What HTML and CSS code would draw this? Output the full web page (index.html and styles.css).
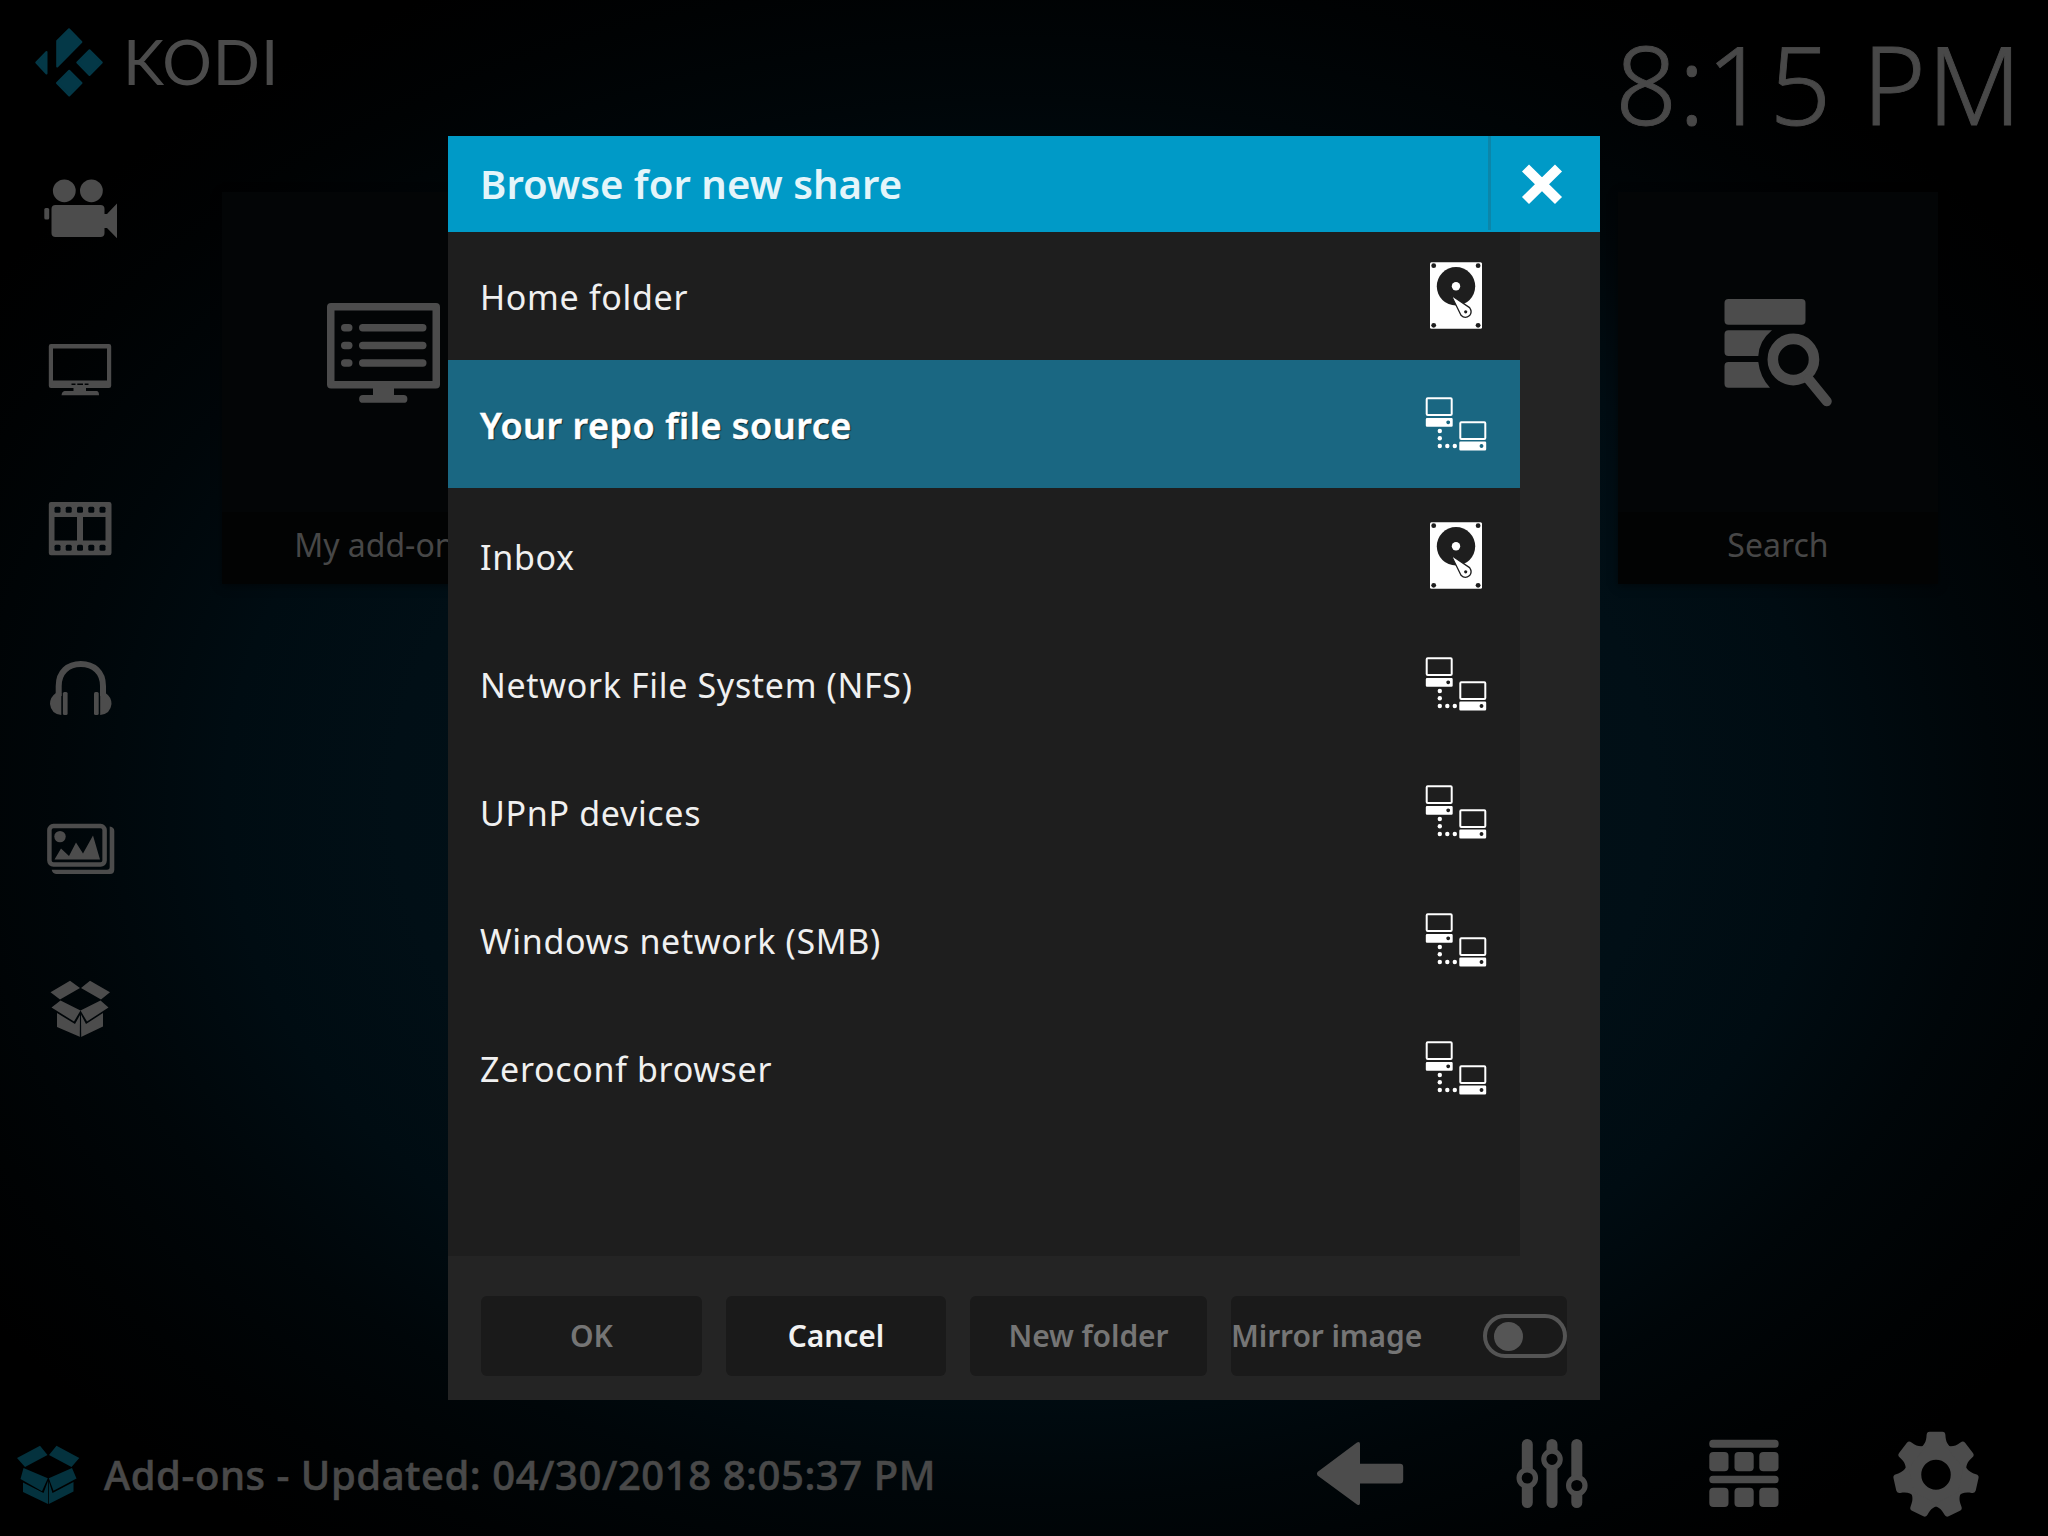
FILE: index.html
```html
<!DOCTYPE html>
<html lang="en">
<head>
<meta charset="utf-8">
<title>Kodi – Browse for new share</title>
<link rel="stylesheet" href="styles.css">
</head>
<body>
<svg class="defs" width="0" height="0" aria-hidden="true">
  <symbol id="hdd" viewBox="0 0 80 128">
    <rect x="14" y="30.3" width="52" height="66.4" rx="1.5" fill="#fff"/>
    <g fill="#1e1e1e">
      <circle cx="17.7" cy="33.7" r="2.4"/><circle cx="62.1" cy="33.7" r="2.4"/>
      <circle cx="17.7" cy="93.3" r="2.4"/><circle cx="62.1" cy="93.3" r="2.4"/>
      <circle cx="40" cy="54.3" r="19.2"/>
    </g>
    <circle cx="40" cy="54.3" r="4.2" fill="#fff"/>
    <path d="M35.2 63.2L53.6 75.6Q56.600 80 53.600 83.600Q49 87.400 45 83.200Z" fill="#fff" stroke="#1e1e1e" stroke-width="1.3" stroke-linejoin="round"/>
    <circle cx="49.7" cy="79.8" r="1.6" fill="#1e1e1e"/>
  </symbol>
  <symbol id="net" viewBox="0 0 80 128">
    <g fill="none" stroke="#fff" stroke-width="2">
      <rect x="10.7" y="38.3" width="25" height="16.6" rx="1"/>
      <rect x="44.3" y="62.3" width="25" height="16.6" rx="1"/>
    </g>
    <path fill="#fff" fill-rule="evenodd" d="M11 58h24.500q1.200 0 1.200 1.200v6.300q0 1.200-1.200 1.200H11q-1.200 0-1.200-1.200v-6.300Q9.800 58 11 58zM32.200 60.400a1.900 1.900 0 1 0 .01 0zM44.500 81.600H69q1.200 0 1.200 1.200v6.400q0 1.200-1.200 1.200H44.500q-1.200 0-1.200-1.200v-6.400q0-1.200 1.200-1.200zM65.500 84.100a1.900 1.900 0 1 0 .01 0z"/>
    <g fill="#fff">
      <circle cx="23.800" cy="71" r="2.200"/><circle cx="23.800" cy="78.300" r="2.200"/><circle cx="23.800" cy="86" r="2.200"/>
      <circle cx="31.300" cy="86" r="2.200"/><circle cx="38.800" cy="86" r="2.200"/>
    </g>
  </symbol>
</svg>

<div class="screen">
  <header class="topbar">
    <div class="brand">
      <svg class="brand-mark" width="123" height="129" viewBox="0 0 123 129">
        <g stroke-width="2" stroke-linejoin="round">
          <path d="M57.200 41L69 29.200L81.400 42L57.200 66.500Z"/>
          <path d="M36.300 62.500L46.500 52V73.500Z"/>
          <path d="M77.300 62.500L89.500 50.200L101.800 62.500L89.500 75Z"/>
          <path d="M57 83L69.200 70.700L81.500 83L69.200 95.500Z"/>
        </g>
      </svg>
      <span class="brand-name">KODI</span>
    </div>
    <div class="clock">8:15 PM</div>
  </header>

  <div class="main">
    <nav class="sidebar">
      <svg viewBox="0 129 160 160">
        <circle cx="64.300" cy="190.800" r="11.400"/><circle cx="91.400" cy="190.800" r="11.400"/>
        <rect x="51.500" y="205" width="53" height="32" rx="4"/>
        <rect x="44.300" y="208" width="4.900" height="11.500" rx="1.500"/>
        <path d="M104 214H107L117 203.500V238.200L107 228H104Z"/>
      </svg>
      <svg viewBox="0 289 160 160">
        <path fill-rule="evenodd" d="M51 344H109Q111.200 344 111.200 346.200V385.800Q111.200 388 109 388H86V391H97Q99 391.500 99 395.200H61.500Q62 391.500 64.500 391H73.500V388H51Q48.800 388 48.800 385.800V346.200Q48.800 344 51 344ZM53 348.500V380.500H107V348.500ZM71.500 383.500V385H75.500V383.500ZM77.300 383.500V385H83V383.500ZM84.700 383.500V385H88.500V383.500Z"/>
      </svg>
      <svg viewBox="0 449 160 160">
        <path fill-rule="evenodd" d="M51 502H109.300Q111.500 502 111.500 504.200V553Q111.500 555.200 109.300 555.200H51Q48.800 555.200 48.800 553V504.200Q48.800 502 51 502ZM54.500 517V540.500H77V517ZM83 517V540.500H105.500V517Z"/>
        <g class="cut">
          <rect x="54.500" y="506.800" width="6" height="6" rx="1.500"/><rect x="65.700" y="506.800" width="6" height="6" rx="1.500"/><rect x="77" y="506.800" width="6" height="6" rx="1.500"/><rect x="88.300" y="506.800" width="6" height="6" rx="1.500"/><rect x="99.500" y="506.800" width="6" height="6" rx="1.500"/>
          <rect x="54.500" y="544.800" width="6" height="6" rx="1.500"/><rect x="65.700" y="544.800" width="6" height="6" rx="1.500"/><rect x="77" y="544.800" width="6" height="6" rx="1.500"/><rect x="88.300" y="544.800" width="6" height="6" rx="1.500"/><rect x="99.500" y="544.800" width="6" height="6" rx="1.500"/>
        </g>
      </svg>
      <svg viewBox="0 609 160 160">
        <path class="line" stroke-width="6" d="M58.700 696V686C58.700 672 68 664 80.800 664S103 672 103 686V696"/>
        <path d="M61.300 693H56Q50 697 50 704Q51 714 61.300 715ZM100.200 693H105.500Q111.500 697 111.500 704Q110.500 714 100.200 715Z"/>
        <rect x="62.900" y="692" width="4.700" height="23" rx="1.500"/><rect x="94" y="692" width="4.700" height="23" rx="1.500"/>
      </svg>
      <svg viewBox="0 769 160 160">
        <rect class="line" x="49.400" y="826.100" width="55.200" height="38.500" rx="4" stroke-width="4.500"/>
        <path d="M109.700 826.500Q114.300 827 114.300 831V869.500Q114.300 874 110 874H56Q52.500 873.500 51.700 869.700H107Q109.700 869.700 109.700 867Z"/>
        <circle cx="60" cy="836.600" r="5.700"/>
        <path d="M54.500 859.500L61 848.500L69 856L76 842.500L83 853.500L93 835.500L100 859.500Z"/>
      </svg>
      <svg viewBox="0 929 160 160">
        <path d="M50.500 992.300L70 980.700L80 988L60 999.500ZM110 992.300L90 980.700L81 988L101 999.500ZM60.500 1000.500L80.500 1010.500L74 1021.500L51.500 1007.500ZM100.500 1000.500L80.500 1010.500L87 1021.500L108.500 1007.500ZM57 1013L75 1024L80.300 1014.500V1037L57 1027ZM103 1013L86 1024L81 1014.500V1037L103 1026.500Z"/>
        <path class="cut" d="M80 1015L79.800 1037H81.200L81 1015Z"/>
      </svg>
    </nav>

    <section class="cards">
      <article class="card">
        <svg class="card-icon" viewBox="222 192 320 320">
          <path fill-rule="evenodd" d="M331 303H436Q440 303 440 307V384.500Q440 388.500 436 388.500H394V395H403.500A3.900 3.900 0 0 1 403.500 402.800H363A3.900 3.900 0 0 1 363 395H373V388.500H331Q327 388.500 327 384.500V307Q327 303 331 303ZM334.500 310.500V381H432.500V310.500Z"/>
          <rect x="341" y="324" width="11.500" height="7.500" rx="3.700"/><rect x="359" y="324" width="67.500" height="7.500" rx="3.700"/>
          <rect x="341" y="341.700" width="11.500" height="7.500" rx="3.700"/><rect x="359" y="341.700" width="67.500" height="7.500" rx="3.700"/>
          <rect x="341" y="359.300" width="11.500" height="7.500" rx="3.700"/><rect x="359" y="359.300" width="67.500" height="7.500" rx="3.700"/>
        </svg>
        <div class="card-label">My add-ons</div>
      </article>
      <article class="card">
        <svg class="card-icon" viewBox="1618 192 320 320">
          <rect x="1724.500" y="299" width="81" height="25.700" rx="4"/>
          <path d="M1728.500 330.300H1772Q1759 341 1758.300 356H1728.500Q1724.500 356 1724.500 352V334.300Q1724.500 330.300 1728.500 330.300ZM1728.500 362H1758.300Q1760 377 1770 387.700H1728.500Q1724.500 387.700 1724.500 383.700V366Q1724.500 362 1728.500 362Z"/>
          <circle class="line" cx="1793.400" cy="359.500" r="20.600" stroke-width="10.600"/>
          <path class="line" stroke-width="10" stroke-linecap="round" d="M1808.500 379L1826.800 401.300"/>
        </svg>
        <div class="card-label">Search</div>
      </article>
    </section>
  </div>

  <footer class="bottombar">
    <div class="status">
      <svg class="status-icon" width="104" height="123" viewBox="0 1413 104 123">
        <path d="M17 1458L40 1445.700L47.500 1455L25 1467ZM79.300 1458L56.500 1445.700L49 1455L71.500 1467ZM23.500 1468L47.800 1478.300L42 1491.200L20.500 1479ZM72 1468L48.800 1478.300L53.500 1490.800L76.500 1478.500ZM23 1482.500L43.500 1493L48 1481V1504L23 1492ZM73.500 1482L52.500 1493L48.800 1481V1504L73.500 1491.500Z"/>
      </svg>
      <span class="status-text">Add-ons - Updated: 04/30/2018 8:05:37 PM</span>
    </div>
    <div class="actions">
      <svg viewBox="1264 1413 192 123">
        <path d="M1317.500 1472L1357 1442.500Q1360 1441 1360 1444V1463.800H1400Q1403.200 1463.800 1403.200 1467V1480Q1403.200 1483.500 1400 1483.500H1360V1503Q1360 1506 1357 1504.500L1317.500 1475.500Q1316.300 1473.700 1317.500 1472Z"/>
      </svg>
      <svg viewBox="1456 1413 192 123">
        <g class="line" stroke-width="11" stroke-linecap="round"><path d="M1527.300 1444.500V1502.500M1552 1444.500V1502.500M1576.800 1444.500V1502.500"/></g>
        <g class="ring"><circle cx="1527.300" cy="1478" r="8.200"/><circle cx="1552" cy="1459.300" r="8.200"/><circle cx="1576.800" cy="1485.500" r="8.200"/></g>
      </svg>
      <svg viewBox="1648 1413 192 123">
        <rect x="1709.300" y="1439.700" width="69.300" height="8" rx="3.500"/>
        <rect x="1709.300" y="1452" width="19.200" height="19.200" rx="4"/><rect x="1734.500" y="1452" width="19.200" height="19.200" rx="4"/><rect x="1759.300" y="1452" width="19.200" height="19.200" rx="4"/>
        <rect x="1709.300" y="1475.700" width="69.300" height="7.500" rx="3.500"/>
        <rect x="1709.300" y="1487.800" width="19.200" height="19.200" rx="4"/><rect x="1734.500" y="1487.800" width="19.200" height="19.200" rx="4"/><rect x="1759.300" y="1487.800" width="19.200" height="19.200" rx="4"/>
      </svg>
      <svg viewBox="-96 -61.700 192 123">
        <defs><path id="tooth" d="M-17 -26C-12 -30 -10 -33 -9.700 -40Q-9.600 -43.500 -6.500 -43.500H6.500Q9.600 -43.500 9.700 -40C10 -33 12 -30 17 -26Z"/></defs>
        <g transform="scale(0.970 0.990)">
        <circle class="line" r="23" stroke-width="15.600"/>
        <use href="#tooth"/><use href="#tooth" transform="rotate(51.430)"/><use href="#tooth" transform="rotate(102.860)"/><use href="#tooth" transform="rotate(154.290)"/><use href="#tooth" transform="rotate(205.710)"/><use href="#tooth" transform="rotate(257.140)"/><use href="#tooth" transform="rotate(308.570)"/>
        </g>
      </svg>
    </div>
  </footer>

  <div class="dialog" role="dialog">
    <div class="dialog-head">
      <h1 class="dialog-title">Browse for new share</h1>
      <button class="close" aria-label="Close">
        <svg width="108" height="96" viewBox="1491 136 108 96"><path d="M1525.500 168L1558.500 200.500M1558.500 168L1525.500 200.500"/></svg>
      </button>
    </div>
    <ul class="list">
      <li class="row">Home folder<svg class="row-icon"><use href="#hdd"/></svg></li>
      <li class="row selected">Your repo file source<svg class="row-icon"><use href="#net"/></svg></li>
      <li class="row">Inbox<svg class="row-icon"><use href="#hdd"/></svg></li>
      <li class="row">Network File System (NFS)<svg class="row-icon"><use href="#net"/></svg></li>
      <li class="row">UPnP devices<svg class="row-icon"><use href="#net"/></svg></li>
      <li class="row">Windows network (SMB)<svg class="row-icon"><use href="#net"/></svg></li>
      <li class="row">Zeroconf browser<svg class="row-icon"><use href="#net"/></svg></li>
    </ul>
    <div class="buttons">
      <button class="btn">OK</button>
      <button class="btn enabled">Cancel</button>
      <button class="btn">New folder</button>
      <button class="btn mirror">Mirror image<span class="toggle"><span class="knob"></span></span></button>
    </div>
  </div>
</div>
</body>
</html>
```
FILE: styles.css
```css
* { box-sizing: border-box; margin: 0; padding: 0; }
body { font-family: "Noto Sans", "Open Sans", sans-serif; background: #000; }
svg { display: block; }
.defs { position: absolute; }

.screen {
  position: relative;
  width: 2048px;
  height: 1536px;
  overflow: hidden;
  display: flex;
  flex-direction: column;
  color: #4b4b4b;
  fill: #4c4c4c;
  background: radial-gradient(1050px 760px at 1024px 800px, #01141c 0%, #010f16 60%, #000c12 76%, #000609 92%, #000203 108%, #000 120%);
}
.line { fill: none; stroke: #4c4c4c; }
.cut { fill: #00060a; }
.ring { fill: #010304; stroke: #4c4c4c; stroke-width: 5.2; }

.topbar { height: 129px; display: flex; justify-content: space-between; }
.brand { display: flex; height: 129px; }
.brand-mark { fill: #043847; stroke: #043847; }
.brand-name { font: 400 62px/122px Lato, sans-serif; letter-spacing: 0.9px; }
.clock {
  height: 129px;
  padding-right: 25px;
  font-size: 108px;
  font-weight: 300;
  line-height: 168px;
  letter-spacing: 1.5px;
  color: #484848;
  -webkit-text-stroke: 0.9px #484848;
}

.main { flex: 1; display: flex; align-items: flex-start; }
.sidebar { width: 160px; display: flex; flex-direction: column; }
.sidebar svg { width: 160px; height: 160px; }
.cards { flex: 1; display: flex; justify-content: space-between; padding: 63px 110px 0 62px; }
.card { width: 320px; height: 392px; background: #030506; box-shadow: 0 2px 8px rgba(0, 0, 0, 0.5); }
.card-icon { width: 320px; height: 320px; }
.card-label { height: 72px; background: #020303; text-align: center; font-size: 32px; line-height: 66px; color: #474747; }

.bottombar { height: 123px; display: flex; justify-content: space-between; }
.status { display: flex; }
.status-icon { fill: #04323e; }
.status-text {
  font-size: 40px;
  font-weight: 500;
  line-height: 123px;
  letter-spacing: 0.56px;
  color: #494949;
  -webkit-text-stroke: 0.6px #494949;
  white-space: nowrap;
}
.actions { display: flex; padding-right: 16px; }
.actions svg { width: 192px; height: 123px; }

.dialog {
  position: absolute;
  left: 448px;
  top: 136px;
  width: 1152px;
  height: 1264px;
  background: #242424;
  display: flex;
  flex-direction: column;
}
.dialog-head { height: 96px; display: flex; justify-content: space-between; background: #009ac7; }
.dialog-title { padding-left: 32px; font-size: 40px; font-weight: 600; line-height: 96px; letter-spacing: 0.05px; color: #e4f5fa; }
.close { width: 112px; height: 94px; border: 0; border-left: 3px solid #0c86a9; background: none; }
.close svg { fill: none; stroke: #fff; stroke-width: 10; }

.list { width: 1072px; height: 1024px; background: #1e1e1e; list-style: none; }
.row {
  height: 128px;
  display: flex;
  justify-content: space-between;
  padding: 0 24px 0 32px;
  font-size: 34px;
  line-height: 130px;
  letter-spacing: 0.67px;
  color: #f0f0f0;
}
.row.selected {
  margin-bottom: 4px;
  background: #1a6782;
  font-size: 36px;
  font-weight: 600;
  line-height: 131px;
  letter-spacing: 0.5px;
  color: #fff;
  -webkit-text-stroke: 0.5px #fff;
  text-shadow: 1px 1px 1px rgba(0, 0, 0, 0.8);
}
.row-icon { width: 80px; height: 128px; }

.buttons { display: flex; gap: 24px; padding: 40px 0 0 33px; }
.btn {
  width: 220px;
  height: 80px;
  border: 0;
  border-radius: 6px;
  background: #1a1a1a;
  color: #757575;
  font: 600 30px/78px "Noto Sans", "Open Sans", sans-serif;
  letter-spacing: -0.1px;
}
.btn:first-child { width: 221px; }
.btn:nth-child(3) { width: 237px; }
.btn.enabled { color: #f2f2f2; }
.btn.mirror { width: 336px; display: flex; justify-content: space-between; align-items: center; }
.toggle { width: 84px; height: 44px; border: 4px solid #545454; border-radius: 22px; display: flex; align-items: center; padding-left: 7px; }
.knob { width: 29px; height: 29px; border-radius: 50%; background: #555; }
```
